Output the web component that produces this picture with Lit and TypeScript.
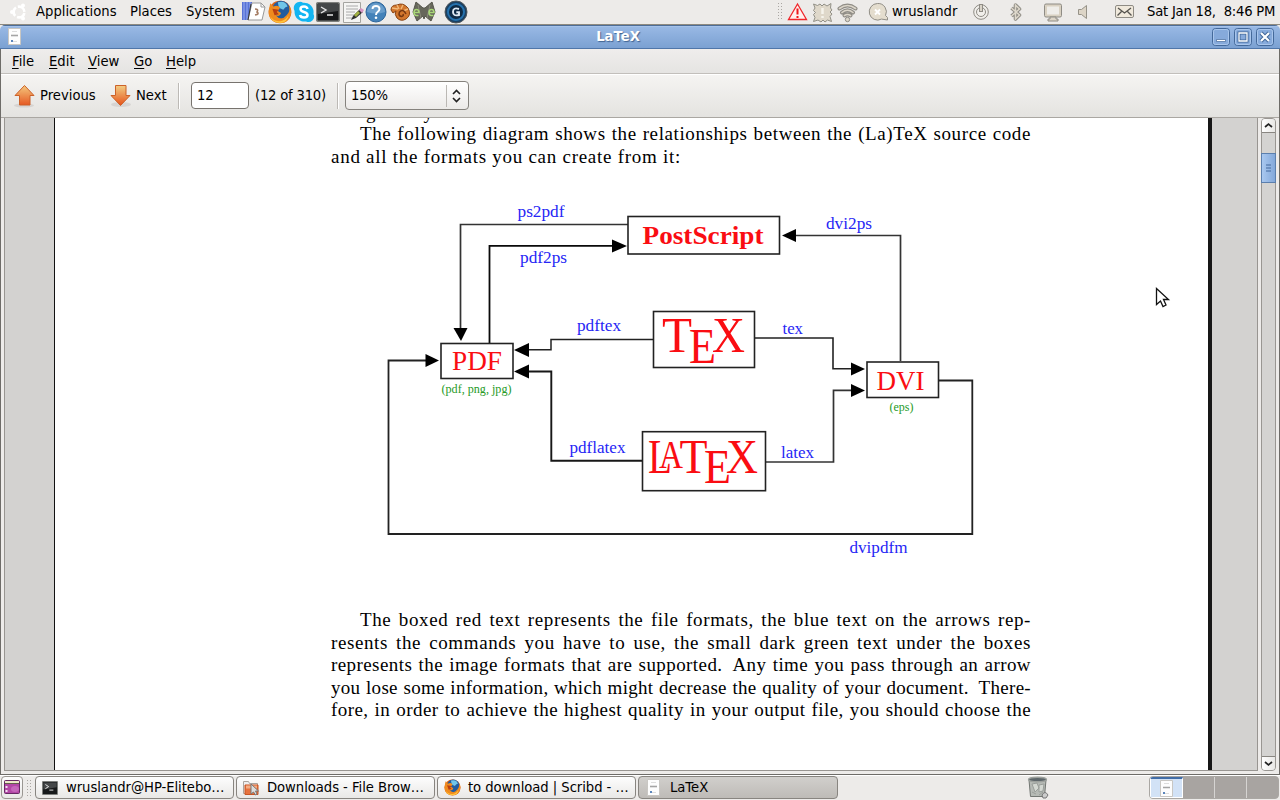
import { LitElement, html, svg, css } from "lit";
import { customElement } from "lit/decorators.js";

const icon = (w: number, h: number, body: unknown) =>
  html`<svg width=${w} height=${h} viewBox="0 0 ${w} ${h}">${body}</svg>`;

const ubuntu = icon(20, 20, svg`<g fill="none" stroke="#fff" stroke-width="2.6"><circle cx="11" cy="10" r="5.4" stroke-dasharray="9.3 2" stroke-dashoffset="-1"/></g><g fill="#fff"><circle cx="4" cy="10" r="2"/><circle cx="15" cy="3.4" r="2"/><circle cx="15" cy="16.600" r="2"/></g>`);
const files = icon(24, 22, svg`<path d="M0 1h10v18H0z" fill="#5872d6"/><path d="M2 1v18M5 1v18M8 1v18" stroke="#9aaef0" /><path d="M10 2h9l4 4-3 13H6z" fill="#fff" stroke="#999"/><path d="M19 2v4h4" fill="none" stroke="#999"/><path d="M9 3L6 19" stroke="#333"/><path d="M13 8q4 0 2 3q3 2-2 3" fill="none" stroke="#a47b62" stroke-width="1.600"/>`);
const firefox = (s: number) => html`<svg width=${s} height=${s} viewBox="0 0 22 22">
  <circle cx="11" cy="11" r="10.4" fill="#dc6417"/><circle cx="12" cy="9" r="8.2" fill="#245c9f"/><path d="M9 2q7-2 9 4q-2 0-4 3l-4-2z" fill="#70c5e9"/>
  <path d="M2 3l3 3q4-2 6 1l-2 3 3 2q-1 4-5 2q5 6 10 0q4-4 2-9q3 4 2 8q-2 8-10 8Q0 20 .7 10z" fill="#f08b1e"/><path d="M2 15q4 6 11 4q5-2 6-6q-1 8-8 8q-7 0-9-6z" fill="#ffc43c"/><path d="M4 8l6 1-2 2 2 2-4 1z" fill="#b83f12"/></svg>`;
const skype = icon(22, 22, svg`<path d="M6 1a5 5 0 0 1 4 .7A9.5 9.5 0 0 1 20.4 13A5.5 5.5 0 0 1 13 20.4A9.6 9.6 0 0 1 1.6 10A6 6 0 0 1 6 1z" fill="#12b5f2"/><path d="M14.500 8Q14 5.500 11 5.500Q7.500 5.500 7.500 8Q7.500 10 11 11Q14.500 12 14.500 14Q14.500 16.500 11 16.500Q7.500 16.500 7 14" fill="none" stroke="#fff" stroke-width="2.5"/>`);
const terminal = (w: number, h: number) => html`<svg width=${w} height=${h} viewBox="0 0 24 20" preserveAspectRatio="none"><rect x=".7" y=".7" width="22.6" height="18.6" rx="1.5" fill="#17191a" stroke="#7d7f7c" stroke-width="1.5"/><path d="M2 2h20v7L2 12z" fill="#444748"/><path d="M5 5l5 3-5 3M11 13h6" fill="none" stroke="#e6e6e6" stroke-width="1.4"/></svg>`;
const notepad = icon(22, 23, svg`<path d="M1.500 1.500h17v20h-17z" fill="#f5f5f3" stroke="#a4a4a0"/><path d="M4 5h12M4 8h12M4 11h9M4 14h8M4 17h6" stroke="#aaa"/><path d="M9 19l2-4L18 8l3 3-7 6z" fill="#303030"/><path d="M17 9l2-2 3 2-2 3z" fill="#d795c3"/><path d="M12 14l2 2 4-4-2-2z" fill="#a0b040"/>`);
const help = icon(22, 22, svg`<circle cx="11" cy="11" r="10" fill="#4482b9" stroke="#2d659a"/><path d="M2 11a9 9 0 0 1 18 0q-9 3-18 0z" fill="#699dcb"/><path d="M7.500 8Q7.500 5 11 5Q14.500 5 14.500 8Q14.500 9.500 12.500 11Q11 12 11 14" fill="none" stroke="#fff" stroke-width="1.900"/><circle cx="11" cy="16.700" r="1.300" fill="#fff"/>`);
const snail = icon(21, 21, svg`<path d="M1 8Q1 3 7 3Q13 0 18 6Q22 13 16 17Q11 20 7 16Q4 12 6 9L3 11z" fill="#d2762d" stroke="#884313"/><path d="M2 6l6 1M7 3l2 4M13 3l-2 4M18 7l-5 2" stroke="#f2b877" stroke-width="1.400"/><path d="M16 12Q13 6 9.500 10Q8 14 11.500 14.500Q14 14 13 12" fill="none" stroke="#753711" stroke-width="1.500"/>`);
const moth = icon(24, 22, svg`<path d="M4 1l7 6h2l7-6 3 10-4 9-6-5-1 3-1-3-6 5-4-9z" fill="#67675b" stroke="#55554b"/><path d="M6 4l3 13M18 4l-3 13" stroke="#8a8a7b"/><g fill="none" stroke="#a9d778" stroke-width="1.600"><path d="M2 11.500h5q0-3-2.500-3t-2.500 3t2.500 3h2M17 11.500h5q0-3-2.500-3t-2.500 3t2.500 3h2"/></g>`);
const gIcon = icon(24, 24, svg`<circle cx="12" cy="12" r="11" fill="#1a4063" stroke="#50565b"/><circle cx="12" cy="12" r="8" fill="#0e2a45" stroke="#2672ae" stroke-width="2"/><path d="M15 9Q9 7 9 12Q9 16.500 15 15V12.300H12.300" fill="none" stroke="#dfe9f3" stroke-width="1.900"/>`);
const dots = (h: number) => html`<svg width="6" height=${h}>${Array.from({ length: Math.floor(h / 3) }, (_, i) => svg`<path d="M0 ${i * 3 + .5}h1M3 ${i * 3 + .5}h1" stroke="#aaa7a3"/>`)}</svg>`;
const warn = icon(22, 20, svg`<path d="M10.500 2L1.500 17.500h18z" fill="#fff0ee" stroke="#f0262b" stroke-width="1.300"/><path d="M10.500 6.500v6M10.500 14v2" stroke="#f0161b" stroke-width="2"/>`);
const patch = icon(22, 21, svg`<path d="M1.500 2l4 1.500L8 2l2 2 2-2 3 2 4-2.500-.5 4.500 1.500 2-2 2 2 2-2 2.500 1.500 5-4-1.500-2.500 2-2-2-2 2-3-2-4.500 1.500 1.500-4-1.500-3 2-2-2-2 1.500-2.500z" fill="#dfd8ca" stroke="#929087"/><path d="M10.500 6v6M10.500 14v2" stroke="#f6f3ec" stroke-width="2.500"/>`);
const wifi = icon(22, 21, svg`<path d="M2.500 6.500Q10.500 .500 18.500 6.500M5 10.500Q10.500 6 16 10.500M7.500 13.500Q10.500 11.500 13.500 13.500" fill="none" stroke="#908d86" stroke-width="4" stroke-linecap="round"/><path d="M2.500 6.500Q10.500 .500 18.500 6.500M5 10.500Q10.500 6 16 10.500M7.500 13.500Q10.500 11.500 13.500 13.500" fill="none" stroke="#dcd6ca" stroke-width="1.600" stroke-linecap="round"/><circle cx="10.500" cy="17.500" r="2.200" fill="#dcd6ca" stroke="#908d86"/>`);
const bubble = icon(22, 20, svg`<path d="M9.500 1.500a8.300 8.300 0 1 0 4 15.600L19.500 18v-2.500l-2-2A8.300 8.300 0 0 0 9.500 1.500z" fill="#e4ddce" stroke="#918e86"/><path d="M7 7.500l5 5M12 7.500l-5 5" stroke="#fff" stroke-width="1.900"/>`);
const power = icon(20, 20, svg`<circle cx="9" cy="10" r="7.300" fill="#f1efeb" stroke="#8f8c85"/><circle cx="9" cy="10" r="4.500" fill="none" stroke="#8f8c85"/><path d="M9 2v8" stroke="#8f8c85" stroke-width="4"/><path d="M9 3v6" stroke="#e7e1d5" stroke-width="1.700"/>`);
const bluetooth = icon(16, 20, svg`<path d="M2.500 6l8 7-4 4V3l4 4-8 7" fill="none" stroke="#8f8c85" stroke-width="3.600" stroke-linejoin="round"/><path d="M2.500 6l8 7-4 4V3l4 4-8 7" fill="none" stroke="#ded8cb" stroke-width="1.500"/>`);
const monitor = icon(20, 20, svg`<rect x="1.500" y="2" width="17" height="13" rx="1.500" fill="#d9d1c2" stroke="#8f8c85"/><path d="M4 4.500h12v8H4z" fill="#efede9"/><path d="M7 15h6v2h2v2H5v-2h2z" fill="#ddd5c7" stroke="#8f8c85"/>`);
const speaker = icon(16, 18, svg`<path d="M1.500 6.500h3l5-4v13l-5-4h-3z" fill="#ddd5c7" stroke="#969288"/>`);
const mail = icon(22, 16, svg`<rect x="1.500" y="1.500" width="18" height="12" rx="1.500" fill="#f0e9dc" stroke="#8f8c85"/><path d="M4 4l6.500 5L17 4M3.500 11.500l4-4M17.500 11.500l-4-4" fill="none" stroke="#55534e" stroke-width="1.300"/>`);
const doc = icon(14, 17, svg`<path d="M.5.500h12v16H.5z" fill="#fdfdfd" stroke="#c9c7c3"/><path d="M4 3.500h5" stroke="#ddd"/><path d="M3 7.500h7" stroke="#a4a4a4" stroke-width="1.600"/><path d="M3 13h2" stroke="#5c86bb" fill="none" stroke-width="2"/><path d="M5 13.500h4" stroke="#ddd"/>`);
const upArrow = icon(22, 24, svg`<defs><linearGradient id="o" x2="0" y2="1"><stop stop-color="#f4c87e"/><stop offset="1" stop-color="#e65923"/></linearGradient></defs><ellipse cx="11" cy="21.500" rx="10" ry="2" fill="#c9c7c4" opacity=".6"/><path d="M11.500 1.500L2 11.500h4.500v9.500h10.500v-9.500H21z" fill="url(#o)" stroke="#cc6129"/>`);
const downArrow = icon(22, 24, svg`<defs><linearGradient id="p" x2="0" y2="1"><stop stop-color="#f2cd83"/><stop offset="1" stop-color="#e65219"/></linearGradient></defs><ellipse cx="11" cy="20.500" rx="10" ry="2.500" fill="#c9c7c4" opacity=".6"/><path d="M5.500 1.500h10.500v10H20L10.500 21.500L1 11.500h4.500z" fill="url(#p)" stroke="#cc6129"/>`);
const desktop = icon(17, 15, svg`<rect x=".5" y=".5" width="15" height="13" rx="1" fill="#b347a6" stroke="#652863"/><path d="M1 1h14v2H1z" fill="#ece9c8"/><path d="M1 3.500h14" stroke="#645f4c"/><path d="M2.500 6v2M2.500 10v2" stroke="#f2dff1" stroke-width="2"/><ellipse cx="11" cy="9" rx="4" ry="3" fill="#c566bb"/>`);
const folder = icon(17, 16, svg`<path d="M.5 1.500h5l1 2h8v10H.5z" fill="#eee" stroke="#aaa49f"/><path d="M2 5h13v9.500H2z" fill="#e6723e" stroke="#c85423"/><path d="M3 5.500h11v3H3z" fill="#f4ab82"/><path d="M8 4v10l2.500-2 2 3 1.500-1-1.500-3h3z" fill="#ddd" stroke="#777"/>`);
const trash = icon(22, 23, svg`<path d="M2 4l1.500 16.500h14L19 4z" fill="#b6bab5" stroke="#737773"/><path d="M5 8l5-1 2 5-4 4zM12 9l5-1-1 7-4 1zM5 16l4 2M12 19l4-3" fill="#d4d8d2" stroke="#9a9e9a"/><ellipse cx="10.500" cy="3.500" rx="9" ry="2.300" fill="#5e676b" stroke="#9da19d" stroke-width="1.400"/><path d="M15 19q3-5 6 0l-2 3h-3z" fill="#ccc" stroke="#777"/>`);

const WIRES: [string, string, number][] = [
  ["M628 224.500H460.500V330", "#333", 1.700],
  ["M489.500 343V245.800H614", "#0a0a0a", 1.800],
  ["M900.500 361V235.500H794", "#333", 1.700],
  ["M653 339.500H551V349.700H526", "#222", 1.500],
  ["M755 338H833V368.800H852", "#222", 1.600],
  ["M642 460.700H551.300V371.500H526", "#171717", 1.900],
  ["M766 462H833.500V390.300H852", "#333", 1.700],
  ["M939 380.500H972.300V534H388.500V360.500H427", "#222", 1.800],
];
const HEADS = [
  "M453.500 328h14L461 341z", "M612 239.500v13l15-6.500z", "M796 229v13l-14-6.500z",
  "M529 343v14l-15-7z", "M529 364.500v14l-15-7z", "M425.500 354v13l13.500-6.500z",
  "M851 362.500v13l14-6.500z", "M851 384v13l14-6.500z",
];
const BOXES = [[628, 216.500, 151.500, 37.500], [653.500, 311.500, 101, 56], [441, 343.500, 72, 35], [867, 362, 71.500, 35.500], [642.500, 431.700, 123, 59]];
const LABELS: [string, number, number, number][] = [
  ["ps2pdf", 517.500, 217, 47], ["pdf2ps", 520, 262.500, 47], ["dvi2ps", 826, 229, 46], ["pdftex", 577, 331, 44],
  ["tex", 782.500, 333.500, 20.500], ["pdflatex", 569.500, 452.500, 56], ["latex", 781, 457.500, 33], ["dvipdfm", 849.500, 552.500, 58],
];
const red = (t: string, x: number, y: number, w: number, s: number, b = false) =>
  svg`<text x=${x} y=${y} fill="#fa0d12" font-size=${s} font-weight=${b ? 700 : 400} textLength=${w} lengthAdjust="spacingAndGlyphs">${t}</text>`;

@customElement("app-root")
export class AppRoot extends LitElement {
  static styles = css`
    :host { display: block; width: 1280px; height: 800px; overflow: hidden; background: #edebe9; color: #000; font: 13.2px/16px "DejaVu Sans", sans-serif; white-space: pre; }
    * { box-sizing: border-box; }
    svg { display: block; flex: none; }
    .screen { height: 800px; display: flex; flex-direction: column; position: relative; }
    .panel { flex: none; height: 25px; display: grid; padding-left: 8px; align-items: center; border-bottom: 1px solid #8e8a80; padding-bottom: 1px;
      grid-template-columns: 28px 94px 56px 56px 26px 25px 23px 26px 23px 25px 22px 32px 334px 9px 25px 25px 31px 24px 80px 37px 34px 34px 37px 33px 1fr; background: #edebe9; }
    .date { letter-spacing: -.23px; }
    .title { flex: none; height: 24px; display: grid; grid-template-columns: 1236px auto; background: linear-gradient(#4d6d97 0 1px, #a5c2ea 1px 2px, #98b8e4 2px, #7ba1d2 23px, #4f76a9 23px); border-radius: 5px 5px 0 0; align-items: center; color: #fff; font-weight: bold; position: relative; }
    .name { text-align: center; text-shadow: 1px 1px 1px #416492; }
    .ticon { position: absolute; left: 8px; top: 3px; }
    .wins { display: flex; gap: 4px; position: absolute; right: 6px; top: 3px; }
    .main { flex: none; height: 726px; border: solid #6e6c68; border-width: 0 1px 1px; display: flex; flex-direction: column; }
    .menu { flex: none; height: 25px; display: grid; grid-template-columns: 37px 39px 46px 32px auto; padding: 1px 0 0 11px; align-items: center; background: linear-gradient(#efedec, #e5e4e2); border-bottom: 1px solid #c2bfbb; }
    u { text-underline-offset: 2px; }
    .tools { flex: none; height: 44px; display: grid; grid-template-columns: 27px 70px 26px 42px 13px 64px 82px 8px auto; padding-left: 12px; align-items: center; background: linear-gradient(#fff 0 1px, #f5f4f2 1px, #e4e3e0); border-bottom: 1px solid #aaa7a2; }
    .sep { width: 2px; height: 26px; border-left: 1px solid #bcb9b5; border-right: 1px solid #fff; }
    .num { letter-spacing: -.22px; }
    .field { width: 58px; height: 27px; background: #fff; border: 1px solid #77736e; border-radius: 4px; padding: 5px 5px; }
    .combo { width: 124px; height: 29px; border: 1px solid #85827d; border-radius: 4px; padding: 0 7px 0 5px; display: flex; align-items: center; background: linear-gradient(#fff, #eceae8); }
    .pct { width: 96px; border-right: 1px solid #bbb8b4; padding: 3px 0; margin-right: 5px; }
    .view { flex: none; height: 656px; display: flex; padding: 0 3px 3px; background: #edebe9; }
    .canvas { width: 1254px; height: 653px; border: solid #989591; border-width: 0 1px 1px; background: #d3d2d0; display: flex; }
    .page { margin-left: 49px; width: 1158px; border-left: 1px solid #111; border-right: 4px solid #171717; background: #fff; overflow: hidden; }
    .body { margin-left: 276px; width: 700px; font: 19px/22.5px "Liberation Serif", serif; white-space: normal; }
    .cut { height: 5px; display: flex; padding-left: 35px; gap: 48px; overflow: hidden; align-items: flex-end; }
    .cut span { height: 18px; line-height: 16px; }
    .line { text-align: justify; text-align-last: justify; letter-spacing: .42px; white-space: nowrap; height: 22.5px; }
    .loose { letter-spacing: .6px; }
    .tight { letter-spacing: .3px; }
    .first { padding-left: 29px; }
    .ragged { text-align-last: left; letter-spacing: .73px; }
    .diagram { margin: 27px 0 44px 49px; }
    .bar { margin-left: 3px; width: 15px; height: 653px; border: 1px solid #999692; background: #d4d3d1; display: flex; flex-direction: column; border-radius: 4px; }
    .btn { height: 14px; border-bottom: 1px solid #888580; background: linear-gradient(90deg, #fff, #e8e7e5); border-radius: 3px 3px 0 0; display: grid; place-items: center; }
    .thumb { margin: 20px -1px 0; height: 30px; border: 1px solid #5b7fad; background: linear-gradient(90deg, #a9c8ef, #83a8da); display: grid; place-items: center; }
    .low { margin-top: auto; border: 0; border-top: 1px solid #888580; border-radius: 0 0 3px 3px; }
    .tasks { flex: none; height: 25px; display: flex; align-items: flex-end; padding: 0 1px 1px; border-top: 1px solid #fff; background: #edebe9; }
    .tasks > * { flex: none; }
    .show { width: 22px; height: 23px; border: 1px solid #9a9792; border-radius: 4px; display: grid; place-items: center; background: linear-gradient(#fdfdfd, #e9e8e6); }
    .grip { margin: 0 2px 1px 4px; }
    .task { width: 199px; height: 23px; border: 1px solid #888580; border-radius: 4px; background: linear-gradient(#fdfdfd, #e9e8e6); padding-left: 6px; display: flex; align-items: center; margin-right: 2px; letter-spacing: -.05px; }
    .task span { width: 24px; }
    .active { width: 200px; background: linear-gradient(#d1cfcc, #bebbb7); padding-left: 8px; }
    .active span { width: 23px; }
    .trash { margin-left: 187px; width: 122px; }
    .pager { width: 130px; height: 23px; border: 1px solid #aaa7a3; border-radius: 4px; background: #a8a4a1; display: grid; grid-template-columns: 33px 32px 32px 1fr; overflow: hidden; }
    .pager div { border-right: 1px solid #d6d4d2; }
    .pager .cur { background: #d2e2f6; border: 1px solid #fff; border-top: 2px solid #426da7; display: grid; place-items: center; }
    .pager div:last-child { border: 0; }
    .cursor { position: absolute; left: 1155px; top: 286px; }
  `;

  render() {
    const win = (body: unknown) => icon(18, 19, svg`<rect x=".5" y=".5" width="17" height="17" rx="3" fill="#86aadb" stroke="#44699a"/><rect x="1.500" y="1.500" width="15" height="15" rx="2" fill="none" stroke="#a9c6ec"/>${body}`);
    return html`<div class="screen">
      <div class="panel">${ubuntu}<span>Applications</span><span>Places</span><span>System</span>${files}${firefox(24)}${skype}${terminal(24, 20)}${notepad}${help}${snail}${moth}${gIcon}${dots(18)}${warn}${patch}${wifi}${bubble}<span>wruslandr</span>${power}${bluetooth}${monitor}${speaker}${mail}<span class="date">Sat Jan 18,  8:46 PM</span></div>
      <div class="title"><span class="ticon">${doc}</span><span class="name">LaTeX</span>
        <span class="wins">${win(svg`<path d="M4.500 11.500h9v2h-9z" fill="#fff" stroke="#44699a" stroke-width=".7"/>`)}${win(svg`<path d="M5 5h8v8H5z" fill="none" stroke="#3e6597" stroke-width="3"/><path d="M5 5h8v8H5z" fill="none" stroke="#fff" stroke-width="1.300"/>`)}${win(svg`<path d="M5 5l8 8M13 5l-8 8" stroke="#3e6597" stroke-width="4"/><path d="M5 5l8 8M13 5l-8 8" stroke="#fff" stroke-width="2.200"/>`)}</span></div>
      <div class="main">
        <div class="menu"><span><u>F</u>ile</span><span><u>E</u>dit</span><span><u>V</u>iew</span><span><u>G</u>o</span><span><u>H</u>elp</span></div>
        <div class="tools">${upArrow}<span>Previous</span>${downArrow}<span>Next</span><i class="sep"></i><div class="field num">12</div><span class="num">(12 of 310)</span><i class="sep"></i><div class="combo"><span class="pct num">150%</span>${icon(9, 14, svg`<path d="M1 5l3.500-3.500L8 5M1 9l3.500 3.500L8 9" fill="none" stroke="#222" stroke-width="1.600"/>`)}</div></div>
        <div class="view">
          <div class="canvas"><div class="page"><div class="body">
            <div class="cut"><span>g</span><span>y</span></div>
            <div class="line loose first">The following diagram shows the relationships between the (La)TeX source code</div>
            <div class="line ragged">and all the formats you can create from it:</div>
            <svg class="diagram" width="600" height="370" viewBox="380 195 600 370" font-family="Liberation Serif, serif">
              ${WIRES.map(([d, c, w]) => svg`<path d=${d} fill="none" stroke=${c} stroke-width=${w}/>`)}
              ${HEADS.map((d) => svg`<path d=${d}/>`)}
              ${BOXES.map(([x, y, w, h]) => svg`<rect x=${x} y=${y} width=${w} height=${h} fill="#fff" stroke="#222" stroke-width="1.600"/>`)}
              ${LABELS.map(([t, x, y, w]) => svg`<text x=${x} y=${y} font-size="16" fill="#2626f5" textLength=${w} lengthAdjust="spacingAndGlyphs">${t}</text>`)}
              ${red("PostScript", 642.500, 243.500, 121, 26, true)}${red("PDF", 452, 370, 50, 28)}${red("DVI", 876.500, 389.500, 48, 28)}
              ${red("T", 662, 352, 30, 51)}${red("E", 689, 362.500, 27, 51)}${red("X", 712, 352, 33, 51)}
              ${red("L", 648, 473, 24, 48)}${red("A", 659, 467.500, 24, 39)}${red("T", 679.500, 473, 28, 48)}${red("E", 704, 483, 27, 48)}${red("X", 726, 473, 32, 48)}
              <text x="441.500" y="393" font-size="12" fill="#269a26" textLength="70" lengthAdjust="spacingAndGlyphs">(pdf, png, jpg)</text>
              <text x="889.500" y="411" font-size="12" fill="#269a26" textLength="24" lengthAdjust="spacingAndGlyphs">(eps)</text>
            </svg>
            <div class="line loose first">The boxed red text represents the file formats, the blue text on the arrows rep-</div>
            <div class="line loose">resents the commands you have to use, the small dark green text under the boxes</div>
            <div class="line">represents the image formats that are supported.&ensp;Any time you pass through an arrow</div>
            <div class="line tight">you lose some information, which might decrease the quality of your document.&ensp;There-</div>
            <div class="line">fore, in order to achieve the highest quality in your output file, you should choose the</div>
          </div></div></div>
          <div class="bar"><div class="btn">${icon(9, 7, svg`<path d="M1 5l3.500-3L8 5" fill="none" stroke="#222" stroke-width="1.700"/>`)}</div><div class="thumb">${icon(6, 8, svg`<path d="M0 1h5M0 4h5M0 7h5" stroke="#42699d"/>`)}</div><div class="btn low">${icon(9, 7, svg`<path d="M1 2l3.500 3L8 2" fill="none" stroke="#222" stroke-width="1.700"/>`)}</div></div>
        </div>
      </div>
      <div class="tasks"><div class="show">${desktop}</div><div class="grip">${dots(18)}</div>
        <div class="task"><span>${terminal(16, 14)}</span>wruslandr@HP-Elitebo…</div>
        <div class="task"><span>${folder}</span>Downloads - File Brow…</div>
        <div class="task"><span>${firefox(17)}</span>to download | Scribd - …</div>
        <div class="task active"><span>${doc}</span>LaTeX</div>
        <div class="trash">${trash}</div>
        <div class="pager"><div class="cur">${doc}</div><div></div><div></div><div></div></div></div>
      <svg class="cursor" width="16" height="24" viewBox="0 0 16 24"><path d="M1.500 2.500v16l4-3.500 2.500 5.500 3-1.500-2.500-5.500h5z" fill="#fff" stroke="#111" stroke-width="1.300"/></svg>
    </div>`;
  }
}
